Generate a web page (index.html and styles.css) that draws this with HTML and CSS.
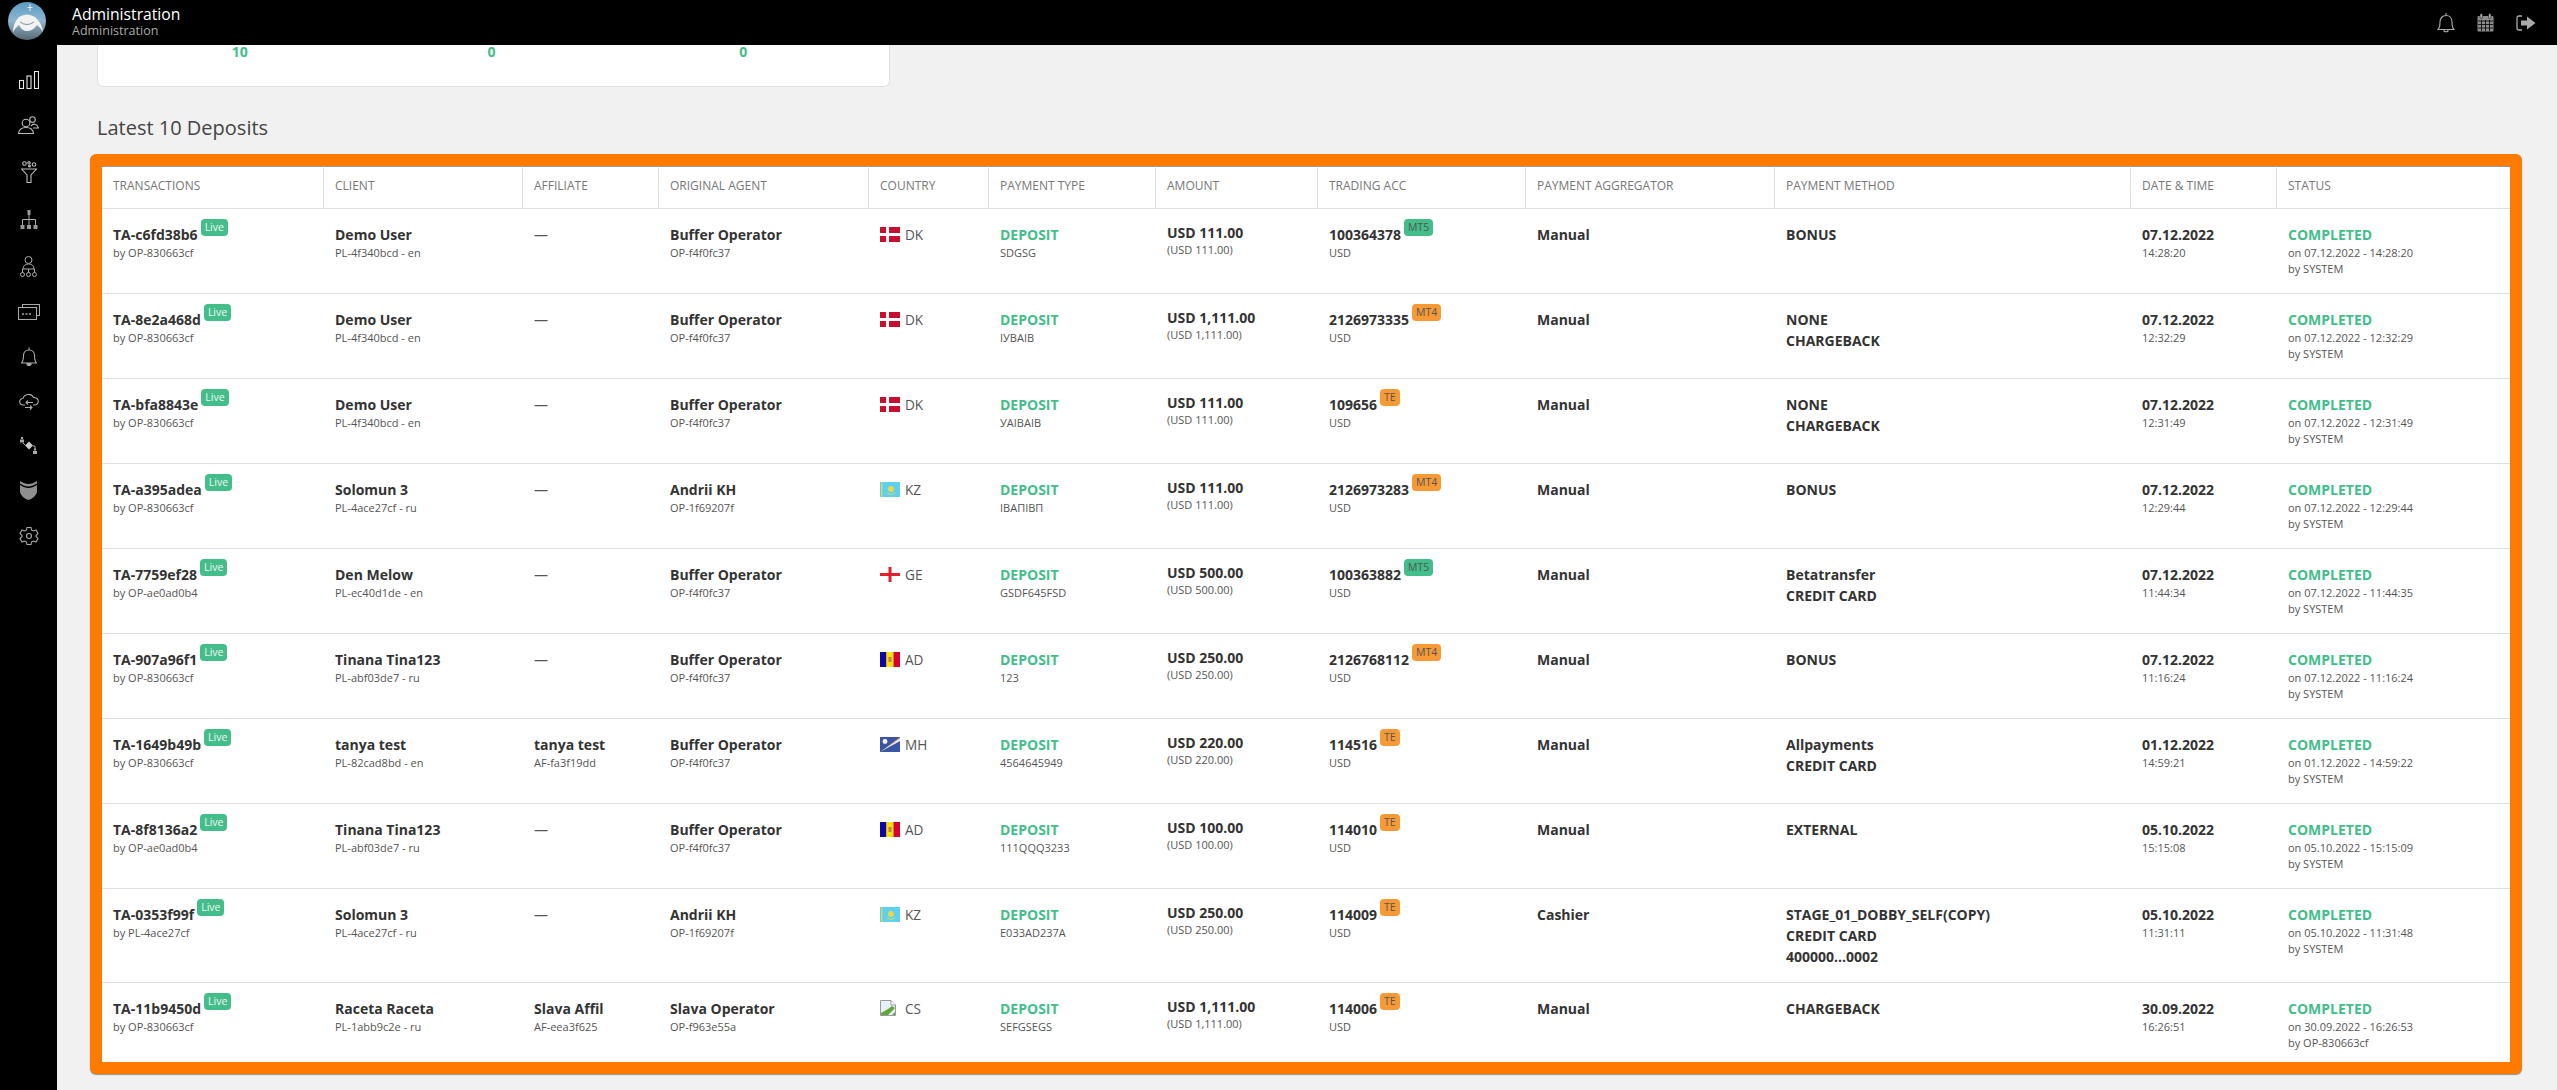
FILE: index.html
```html
<!DOCTYPE html>
<html>
<head>
  <meta charset="UTF-8">
  <title>Administration</title>
  <link rel="stylesheet" href="styles.css">
</head>
<body>
  <svg class="defs" width="0" height="0">
    <symbol id="flag-dk" viewBox="0 0 20 15">
      <rect width="20" height="15" fill="#c8102e"/>
      <rect x="6" width="3" height="15" fill="#fff"/>
      <rect y="6" width="20" height="3" fill="#fff"/>
    </symbol>
    <symbol id="flag-kz" viewBox="0 0 20 15">
      <rect width="20" height="15" fill="#5fd0ee"/>
      <rect x="1" width="1.4" height="15" fill="#d8d860"/>
      <circle cx="11" cy="7" r="3" fill="#e6d84a"/>
      <path d="M7 11 Q11 14 15 11" stroke="#d8d860" fill="none"/>
    </symbol>
    <symbol id="flag-ge" viewBox="0 0 20 15">
      <rect width="20" height="15" fill="#fff"/>
      <rect x="8.5" width="3" height="15" fill="#e0202c"/>
      <rect y="6" width="20" height="3" fill="#e0202c"/>
    </symbol>
    <symbol id="flag-ad" viewBox="0 0 20 15">
      <rect width="6.5" height="15" fill="#10069f"/>
      <rect x="6.5" width="7" height="15" fill="#fedd00"/>
      <rect x="13.5" width="6.5" height="15" fill="#d50032"/>
      <rect x="8.5" y="5" width="3" height="5" fill="#c7802f"/>
    </symbol>
    <symbol id="flag-mh" viewBox="0 0 20 15">
      <rect width="20" height="15" fill="#3b55a5"/>
      <path d="M0 15 L20 1 V4 Z" fill="#f0f0f0"/>
      <path d="M0 15 L20 0 V1 Z" fill="#e08a3c"/>
      <circle cx="5" cy="4.5" r="2.4" fill="#fff"/>
    </symbol>
    <symbol id="img-broken" viewBox="0 0 16 16">
      <path d="M.5.5H11L15.500 5V15.500H.5Z" fill="#e8f0fb" stroke="#9a9a9a"/>
      <path d="M11 .5V5H15.500" fill="#fff" stroke="#9a9a9a"/>
      <path d="M1 15V13L8 9 12 6 15 8 8 15Z" fill="#5fa83c"/>
      <path d="M12 15L15 12V15Z" fill="#5fa83c"/>
    </symbol>
  </svg>

  <header class="topbar">
    <svg class="logo" width="38" height="38" viewBox="0 0 38 38">
      <defs>
        <linearGradient id="logo-bg" x1="0" y1="0" x2="0" y2="1">
          <stop offset="0" stop-color="#5b9cc4"/>
          <stop offset="0.5" stop-color="#8fb6cf"/>
          <stop offset="1" stop-color="#5a6872"/>
        </linearGradient>
      </defs>
      <circle cx="19" cy="19" r="19" fill="url(#logo-bg)"/>
      <path d="M5 30 Q5 21 11 15 Q19 10 27 15 Q34 21 35 30 Q32 25 29 23 Q25 29 19 29 Q14 29 11 23 Q8 25 5 30Z" fill="#f2f2f2"/>
      <path d="M12 20 Q19 25 26 20" stroke="#7f929e" fill="none"/>
      <path d="M22 2V9M19.500 5.500H24.500" stroke="#dfeaf2"/>
    </svg>
    <div class="topbar-title">
      <div class="topbar-name">Administration</div>
      <div class="topbar-sub">Administration</div>
    </div>
    <div class="topbar-icons">
      <svg width="18" height="21" viewBox="0 0 18 21" fill="none" stroke="#aaa" stroke-width="1.1">
        <path d="M1 17.500C3 15.500 3 13 3 10C3 6 5.500 3.500 9 3.500C12.500 3.500 15 6 15 10C15 13 15 15.500 17 17.500Z"/>
        <path d="M9 3.500V1M7 18V19C8 20 10 20 11 19V18" />
      </svg>
      <svg width="17" height="19" viewBox="0 0 17 19">
        <rect x="0.500" y="3" width="16" height="15.500" rx="1" fill="#8d8d8d"/>
        <path d="M1 8H16M1 11.500H16M1 15H16M4.500 7V18M8.500 7V18M12.500 7V18" stroke="#000" stroke-width="0.8"/>
        <rect x="3" y="0.500" width="2.500" height="5" rx="1.200" fill="#aaa" stroke="#000" stroke-width="0.500"/>
        <rect x="11.500" y="0.500" width="2.500" height="5" rx="1.200" fill="#aaa" stroke="#000" stroke-width="0.500"/>
      </svg>
      <svg width="20" height="16" viewBox="0 0 20 16">
        <path d="M6 1H3C1.800 1 1 1.800 1 3V13C1 14.200 1.800 15 3 15H6" fill="none" stroke="#aaa" stroke-width="1.300"/>
        <path d="M5 5.500H11V1.500L19.500 8L11 14.500V10.500H5Z" fill="#aaa"/>
      </svg>
    </div>
  </header>

  <div class="layout">
    <nav class="sidebar">
      <svg width="20" height="18" viewBox="0 0 20 18" fill="none" stroke="#e6e6e6" stroke-width="1.100">
        <rect x="0.500" y="9.500" width="4" height="8"/><rect x="8" y="5" width="4" height="12.500"/><rect x="15.500" y="0.500" width="4" height="17"/>
      </svg>
      <svg width="21" height="18" viewBox="0 0 21 18" fill="none" stroke="#bbb" stroke-width="1.100">
        <circle cx="8" cy="7" r="3.800"/><path d="M.5 17.500C1 13 4 11.500 8 11.500C12 11.500 15 13 15.500 17.500Z"/>
        <circle cx="14.500" cy="3.500" r="2.800"/><path d="M13 10C15 7 19 7.500 20.500 12H15"/>
      </svg>
      <svg width="16" height="22" viewBox="0 0 16 22" fill="none" stroke="#bbb" stroke-width="1.100">
        <circle cx="3.500" cy="2.500" r="1.800"/><circle cx="8" cy="1.800" r="1.200"/><circle cx="13" cy="3.500" r="1.800"/><circle cx="8.500" cy="5" r="1"/>
        <path d="M.5 8H15.500L10 14V21.500H6V14Z"/>
      </svg>
      <svg width="18" height="19" viewBox="0 0 18 19" fill="#999">
        <rect x="7.500" y="0" width="3" height="5"/>
        <path d="M9 5V15M2.500 15V9.500H15.500V15" stroke="#aaa" fill="none"/>
        <rect x="0.500" y="15" width="4" height="4"/><rect x="7" y="15" width="4" height="4"/><rect x="13.500" y="15" width="4" height="4"/>
      </svg>
      <svg width="17" height="21" viewBox="0 0 17 21" fill="none" stroke="#aaa" stroke-width="1">
        <circle cx="8.500" cy="4" r="3.500"/><path d="M3 13C3 9.500 5.500 8 8.500 8C11.500 8 14 9.500 14 13Z"/>
        <path d="M2.500 13V16.500M8.500 13V16.500M14.500 13V16.500"/>
        <circle cx="2.500" cy="18.500" r="2"/><circle cx="8.500" cy="18.500" r="2"/><circle cx="14.500" cy="18.500" r="2"/>
      </svg>
      <svg width="22" height="16" viewBox="0 0 22 16" fill="none" stroke="#aaa" stroke-width="1.100">
        <path d="M4.500 3V.5H21.500V11.500H18.500"/><rect x="0.500" y="3.500" width="18" height="12" fill="#000"/>
        <path d="M4 10H14" stroke-dasharray="2 1.500" stroke-width="1.500"/>
      </svg>
      <svg width="16" height="19" viewBox="0 0 16 19" fill="none" stroke="#aaa" stroke-width="1.100">
        <path d="M.5 16C2.500 14 2.500 11 2.500 8.500C2.500 5 5 3 8 3C11 3 13.500 5 13.500 8.500C13.500 11 13.500 14 15.500 16Z"/>
        <path d="M8 3V.5"/><path d="M6 16.500H10V17.500C9 19 7 19 6 17.500Z" fill="#aaa"/>
      </svg>
      <svg width="20" height="17" viewBox="0 0 20 17" fill="none" stroke="#aaa" stroke-width="1.100">
        <path d="M6 12H4.500C-.5 12 -.5 5.500 4 5.500C5 1 12 -.5 14.500 4.500C20.500 4 21 12 15 12H14"/>
        <path d="M7 9.500H14M9 7.500L7 9.500L9 11.500M6 14.500H13M11 12.500L13 14.500L11 16.500"/>
      </svg>
      <svg width="18" height="17" viewBox="0 0 18 17" fill="#aaa">
        <rect x="1" y="0" width="2" height="2"/><rect x="0" y="2.500" width="4" height="3"/>
        <path d="M9 4.500L13 8.500L9 12.500L5 8.500Z" fill="#ccc"/>
        <path d="M3 6L5 8M13 9H15V13" stroke="#aaa" fill="none"/>
        <rect x="14" y="11.500" width="2" height="2"/><rect x="13" y="14" width="4" height="3"/>
      </svg>
      <svg width="17" height="19" viewBox="0 0 17 19" fill="#8f8f8f">
        <path d="M0 0C3 2 6 3 8.500 3C11 3 14 2 17 0V2.500C14 4.500 11 5.500 8.500 5.500C6 5.500 3 4.500 0 2.500Z"/>
        <path d="M0 4C3 6 6 7 8.500 7C11 7 14 6 17 4V11C16 15 12 18 8.500 19C5 18 1 15 0 11Z"/>
      </svg>
      <svg width="20" height="18" viewBox="0 0 20 18" fill="none" stroke="#aaa" stroke-width="1.100">
        <path d="M8 .5H12L12.500 3L14.500 4L17 3L19 6.500L17 8.500V9.500L19 11.500L17 15L14.500 14L12.500 15L12 17.500H8L7.500 15L5.500 14L3 15L1 11.500L3 9.500V8.500L1 6.500L3 3L5.500 4L7.500 3Z"/>
        <circle cx="10" cy="9" r="2.500"/>
      </svg>
    </nav>

    <main class="content">
      <div class="stats-card">
        <div class="stat">10</div>
        <div class="stat">0</div>
        <div class="stat">0</div>
      </div>

      <h2 class="section-title">Latest 10 Deposits</h2>

      <div class="table-frame">
        <table class="deposits">
          <colgroup>
            <col class="c-tx"><col class="c-client"><col class="c-aff"><col class="c-agent"><col class="c-country"><col class="c-type">
            <col class="c-amount"><col class="c-acc"><col class="c-aggr"><col class="c-method"><col class="c-date"><col class="c-status">
          </colgroup>
          <thead>
            <tr>
              <th>Transactions</th><th>Client</th><th>Affiliate</th><th>Original agent</th><th>Country</th><th>Payment type</th>
              <th>Amount</th><th>Trading acc</th><th>Payment aggregator</th><th>Payment method</th><th>Date &amp; time</th><th>Status</th>
            </tr>
          </thead>
          <tbody>
            <tr>
              <td><b>TA-c6fd38b6</b><span class="badge live">Live</span><small>by OP-830663cf</small></td>
              <td><b>Demo User</b><small>PL-4f340bcd - en</small></td>
              <td class="none">—</td>
              <td><b>Buffer Operator</b><small>OP-f4f0fc37</small></td>
              <td class="country"><svg class="flag"><use href="#flag-dk"/></svg>DK</td>
              <td><b class="green">DEPOSIT</b><small>SDGSG</small></td>
              <td class="amount"><b>USD 111.00</b><small>(USD 111.00)</small></td>
              <td><b>100364378</b><span class="badge mt5">MT5</span><small>USD</small></td>
              <td><b>Manual</b></td>
              <td><b>BONUS</b></td>
              <td><b>07.12.2022</b><small>14:28:20</small></td>
              <td><b class="green">COMPLETED</b><small>on 07.12.2022 - 14:28:20</small><small>by SYSTEM</small></td>
            </tr>
            <tr>
              <td><b>TA-8e2a468d</b><span class="badge live">Live</span><small>by OP-830663cf</small></td>
              <td><b>Demo User</b><small>PL-4f340bcd - en</small></td>
              <td class="none">—</td>
              <td><b>Buffer Operator</b><small>OP-f4f0fc37</small></td>
              <td class="country"><svg class="flag"><use href="#flag-dk"/></svg>DK</td>
              <td><b class="green">DEPOSIT</b><small>ІУВАІВ</small></td>
              <td class="amount"><b>USD 1,111.00</b><small>(USD 1,111.00)</small></td>
              <td><b>2126973335</b><span class="badge mt4">MT4</span><small>USD</small></td>
              <td><b>Manual</b></td>
              <td><b>NONE</b><b>CHARGEBACK</b></td>
              <td><b>07.12.2022</b><small>12:32:29</small></td>
              <td><b class="green">COMPLETED</b><small>on 07.12.2022 - 12:32:29</small><small>by SYSTEM</small></td>
            </tr>
            <tr>
              <td><b>TA-bfa8843e</b><span class="badge live">Live</span><small>by OP-830663cf</small></td>
              <td><b>Demo User</b><small>PL-4f340bcd - en</small></td>
              <td class="none">—</td>
              <td><b>Buffer Operator</b><small>OP-f4f0fc37</small></td>
              <td class="country"><svg class="flag"><use href="#flag-dk"/></svg>DK</td>
              <td><b class="green">DEPOSIT</b><small>УАІВАІВ</small></td>
              <td class="amount"><b>USD 111.00</b><small>(USD 111.00)</small></td>
              <td><b>109656</b><span class="badge mt4">TE</span><small>USD</small></td>
              <td><b>Manual</b></td>
              <td><b>NONE</b><b>CHARGEBACK</b></td>
              <td><b>07.12.2022</b><small>12:31:49</small></td>
              <td><b class="green">COMPLETED</b><small>on 07.12.2022 - 12:31:49</small><small>by SYSTEM</small></td>
            </tr>
            <tr>
              <td><b>TA-a395adea</b><span class="badge live">Live</span><small>by OP-830663cf</small></td>
              <td><b>Solomun 3</b><small>PL-4ace27cf - ru</small></td>
              <td class="none">—</td>
              <td><b>Andrii KH</b><small>OP-1f69207f</small></td>
              <td class="country"><svg class="flag"><use href="#flag-kz"/></svg>KZ</td>
              <td><b class="green">DEPOSIT</b><small>ІВАПІВП</small></td>
              <td class="amount"><b>USD 111.00</b><small>(USD 111.00)</small></td>
              <td><b>2126973283</b><span class="badge mt4">MT4</span><small>USD</small></td>
              <td><b>Manual</b></td>
              <td><b>BONUS</b></td>
              <td><b>07.12.2022</b><small>12:29:44</small></td>
              <td><b class="green">COMPLETED</b><small>on 07.12.2022 - 12:29:44</small><small>by SYSTEM</small></td>
            </tr>
            <tr>
              <td><b>TA-7759ef28</b><span class="badge live">Live</span><small>by OP-ae0ad0b4</small></td>
              <td><b>Den Melow</b><small>PL-ec40d1de - en</small></td>
              <td class="none">—</td>
              <td><b>Buffer Operator</b><small>OP-f4f0fc37</small></td>
              <td class="country"><svg class="flag"><use href="#flag-ge"/></svg>GE</td>
              <td><b class="green">DEPOSIT</b><small>GSDF645FSD</small></td>
              <td class="amount"><b>USD 500.00</b><small>(USD 500.00)</small></td>
              <td><b>100363882</b><span class="badge mt5">MT5</span><small>USD</small></td>
              <td><b>Manual</b></td>
              <td><b>Betatransfer</b><b>CREDIT CARD</b></td>
              <td><b>07.12.2022</b><small>11:44:34</small></td>
              <td><b class="green">COMPLETED</b><small>on 07.12.2022 - 11:44:35</small><small>by SYSTEM</small></td>
            </tr>
            <tr>
              <td><b>TA-907a96f1</b><span class="badge live">Live</span><small>by OP-830663cf</small></td>
              <td><b>Tinana Tina123</b><small>PL-abf03de7 - ru</small></td>
              <td class="none">—</td>
              <td><b>Buffer Operator</b><small>OP-f4f0fc37</small></td>
              <td class="country"><svg class="flag"><use href="#flag-ad"/></svg>AD</td>
              <td><b class="green">DEPOSIT</b><small>123</small></td>
              <td class="amount"><b>USD 250.00</b><small>(USD 250.00)</small></td>
              <td><b>2126768112</b><span class="badge mt4">MT4</span><small>USD</small></td>
              <td><b>Manual</b></td>
              <td><b>BONUS</b></td>
              <td><b>07.12.2022</b><small>11:16:24</small></td>
              <td><b class="green">COMPLETED</b><small>on 07.12.2022 - 11:16:24</small><small>by SYSTEM</small></td>
            </tr>
            <tr>
              <td><b>TA-1649b49b</b><span class="badge live">Live</span><small>by OP-830663cf</small></td>
              <td><b>tanya test</b><small>PL-82cad8bd - en</small></td>
              <td><b>tanya test</b><small>AF-fa3f19dd</small></td>
              <td><b>Buffer Operator</b><small>OP-f4f0fc37</small></td>
              <td class="country"><svg class="flag"><use href="#flag-mh"/></svg>MH</td>
              <td><b class="green">DEPOSIT</b><small>4564645949</small></td>
              <td class="amount"><b>USD 220.00</b><small>(USD 220.00)</small></td>
              <td><b>114516</b><span class="badge mt4">TE</span><small>USD</small></td>
              <td><b>Manual</b></td>
              <td><b>Allpayments</b><b>CREDIT CARD</b></td>
              <td><b>01.12.2022</b><small>14:59:21</small></td>
              <td><b class="green">COMPLETED</b><small>on 01.12.2022 - 14:59:22</small><small>by SYSTEM</small></td>
            </tr>
            <tr>
              <td><b>TA-8f8136a2</b><span class="badge live">Live</span><small>by OP-ae0ad0b4</small></td>
              <td><b>Tinana Tina123</b><small>PL-abf03de7 - ru</small></td>
              <td class="none">—</td>
              <td><b>Buffer Operator</b><small>OP-f4f0fc37</small></td>
              <td class="country"><svg class="flag"><use href="#flag-ad"/></svg>AD</td>
              <td><b class="green">DEPOSIT</b><small>111QQQ3233</small></td>
              <td class="amount"><b>USD 100.00</b><small>(USD 100.00)</small></td>
              <td><b>114010</b><span class="badge mt4">TE</span><small>USD</small></td>
              <td><b>Manual</b></td>
              <td><b>EXTERNAL</b></td>
              <td><b>05.10.2022</b><small>15:15:08</small></td>
              <td><b class="green">COMPLETED</b><small>on 05.10.2022 - 15:15:09</small><small>by SYSTEM</small></td>
            </tr>
            <tr>
              <td><b>TA-0353f99f</b><span class="badge live">Live</span><small>by PL-4ace27cf</small></td>
              <td><b>Solomun 3</b><small>PL-4ace27cf - ru</small></td>
              <td class="none">—</td>
              <td><b>Andrii KH</b><small>OP-1f69207f</small></td>
              <td class="country"><svg class="flag"><use href="#flag-kz"/></svg>KZ</td>
              <td><b class="green">DEPOSIT</b><small>E033AD237A</small></td>
              <td class="amount"><b>USD 250.00</b><small>(USD 250.00)</small></td>
              <td><b>114009</b><span class="badge mt4">TE</span><small>USD</small></td>
              <td><b>Cashier</b></td>
              <td><b>STAGE_01_DOBBY_SELF(COPY)</b><b>CREDIT CARD</b><b>400000...0002</b></td>
              <td><b>05.10.2022</b><small>11:31:11</small></td>
              <td><b class="green">COMPLETED</b><small>on 05.10.2022 - 11:31:48</small><small>by SYSTEM</small></td>
            </tr>
            <tr class="last">
              <td><b>TA-11b9450d</b><span class="badge live">Live</span><small>by OP-830663cf</small></td>
              <td><b>Raceta Raceta</b><small>PL-1abb9c2e - ru</small></td>
              <td><b>Slava Affil</b><small>AF-eea3f625</small></td>
              <td><b>Slava Operator</b><small>OP-f963e55a</small></td>
              <td class="country"><svg class="flag broken"><use href="#img-broken"/></svg>CS</td>
              <td><b class="green">DEPOSIT</b><small>SEFGSEGS</small></td>
              <td class="amount"><b>USD 1,111.00</b><small>(USD 1,111.00)</small></td>
              <td><b>114006</b><span class="badge mt4">TE</span><small>USD</small></td>
              <td><b>Manual</b></td>
              <td><b>CHARGEBACK</b></td>
              <td><b>30.09.2022</b><small>16:26:51</small></td>
              <td><b class="green">COMPLETED</b><small>on 30.09.2022 - 16:26:53</small><small>by OP-830663cf</small></td>
            </tr>
          </tbody>
        </table>
      </div>
    </main>
  </div>
</body>
</html>
```

FILE: styles.css
```css
:root {
  --green: #43be8a;
  --orange: #ff7b00;
  --badge-orange: #f79a35;
  --text: #333;
  --muted: #555;
  --line: #e0e0e0;
}

* {
  box-sizing: border-box;
}

html, body {
  height: 100%;
}

body {
  margin: 0;
  display: flex;
  flex-direction: column;
  overflow: hidden;
  font-family: "Open Sans", "Noto Sans", sans-serif;
  color: var(--text);
  background-color: #f1f1f1;
}

.defs {
  position: absolute;
}

/* top bar */
.topbar {
  flex: none;
  display: flex;
  align-items: center;
  height: 45px;
  padding: 0 21px 0 8px;
  background-color: #000;
}

.logo {
  margin-top: -3px;
}

.topbar-title {
  margin-left: 26px;
  margin-top: -1px;
}

.topbar-name {
  font-size: 15.700px;
  line-height: 17px;
  color: #fff;
}

.topbar-sub {
  font-size: 12.500px;
  line-height: 15px;
  color: #aaa;
}

.topbar-icons {
  margin-left: auto;
  display: flex;
  align-items: center;
  gap: 22px;
}

/* sidebar */
.layout {
  flex: 1;
  display: flex;
  min-height: 0;
}

.sidebar {
  flex: none;
  width: 57px;
  display: flex;
  flex-direction: column;
  align-items: center;
  gap: 27px;
  padding-top: 26px;
  background-color: #000;
}

.sidebar svg {
  display: block;
  flex: none;
}

/* content */
.content {
  flex: 1;
  padding: 0 35px 0 33px;
  min-width: 0;
}

.stats-card {
  display: grid;
  grid-template-columns: repeat(3, 1fr);
  width: 793px;
  height: 42px;
  margin-left: 7px;
  padding: 0 20px 0 16px;
  background-color: #fff;
  border: 1px solid var(--line);
  border-top: none;
  border-radius: 0 0 6px 6px;
}

.stat {
  text-align: center;
  font-size: 14px;
  font-weight: 700;
  line-height: 14px;
  color: var(--green);
}

.section-title {
  margin: 27px 0 12px 7px;
  font-size: 20px;
  font-weight: 400;
  line-height: 28px;
  color: #444;
}

.table-frame {
  border: 12px solid var(--orange);
  border-radius: 6px;
  background-color: #fff;
  box-shadow: 0 1px 1px rgba(0, 0, 0, 0.4);
}

/* table */
.deposits {
  width: 100%;
  table-layout: fixed;
  border-collapse: separate;
  border-spacing: 0;
}

.c-tx { width: 222px; }
.c-client { width: 199px; }
.c-aff { width: 136px; }
.c-agent { width: 210px; }
.c-country { width: 120px; }
.c-type { width: 167px; }
.c-amount { width: 162px; }
.c-acc { width: 208px; }
.c-aggr { width: 249px; }
.c-method { width: 356px; }
.c-date { width: 146px; }
.c-status { width: 233px; }

.deposits th {
  height: 43px;
  padding: 0 11px 4px;
  border-right: 1px solid var(--line);
  border-bottom: 1px solid var(--line);
  border-top: 1px solid #999;
  text-align: left;
  font-size: 12px;
  font-weight: 400;
  text-transform: uppercase;
  color: #777;
}

.deposits th:last-child {
  border-right: none;
}

.deposits td {
  height: 85px;
  padding: 15px 11px;
  border-bottom: 1px solid var(--line);
  vertical-align: top;
  font-size: 14px;
  line-height: 21px;
}

.deposits .last td {
  height: 79px;
  padding-bottom: 0;
  border-bottom: none;
}

.deposits b {
  font-size: 14px;
  font-weight: 700;
  line-height: 21px;
  color: var(--text);
}

.deposits td > b:nth-of-type(n+2) {
  display: block;
}

.deposits small {
  display: block;
  font-size: 11px;
  line-height: 16px;
  color: var(--muted);
}

.deposits .green {
  color: var(--green);
}

.deposits .none {
  color: var(--muted);
}

.deposits .amount {
  padding-top: 13px;
}

.deposits .amount small {
  margin-top: -1px;
}

.deposits .country {
  font-size: 13.600px;
  color: var(--muted);
}

.flag {
  width: 20px;
  height: 15px;
  margin-right: 5px;
  vertical-align: -2px;
}

.flag.broken {
  width: 16px;
  height: 16px;
  margin-right: 9px;
}

/* negative top margin keeps the raised badge from pushing the text line down */
.badge {
  display: inline-block;
  margin: -8px 0 0 3px;
  padding: 0 4px;
  height: 17px;
  border-radius: 4px;
  font-size: 10.500px;
  line-height: 17px;
  vertical-align: 9px;
  color: var(--muted);
}

.badge.live {
  background-color: var(--green);
  color: #f4f4f4;
}

.badge.mt5 {
  background-color: var(--green);
}

.badge.mt4 {
  background-color: var(--badge-orange);
}
```
